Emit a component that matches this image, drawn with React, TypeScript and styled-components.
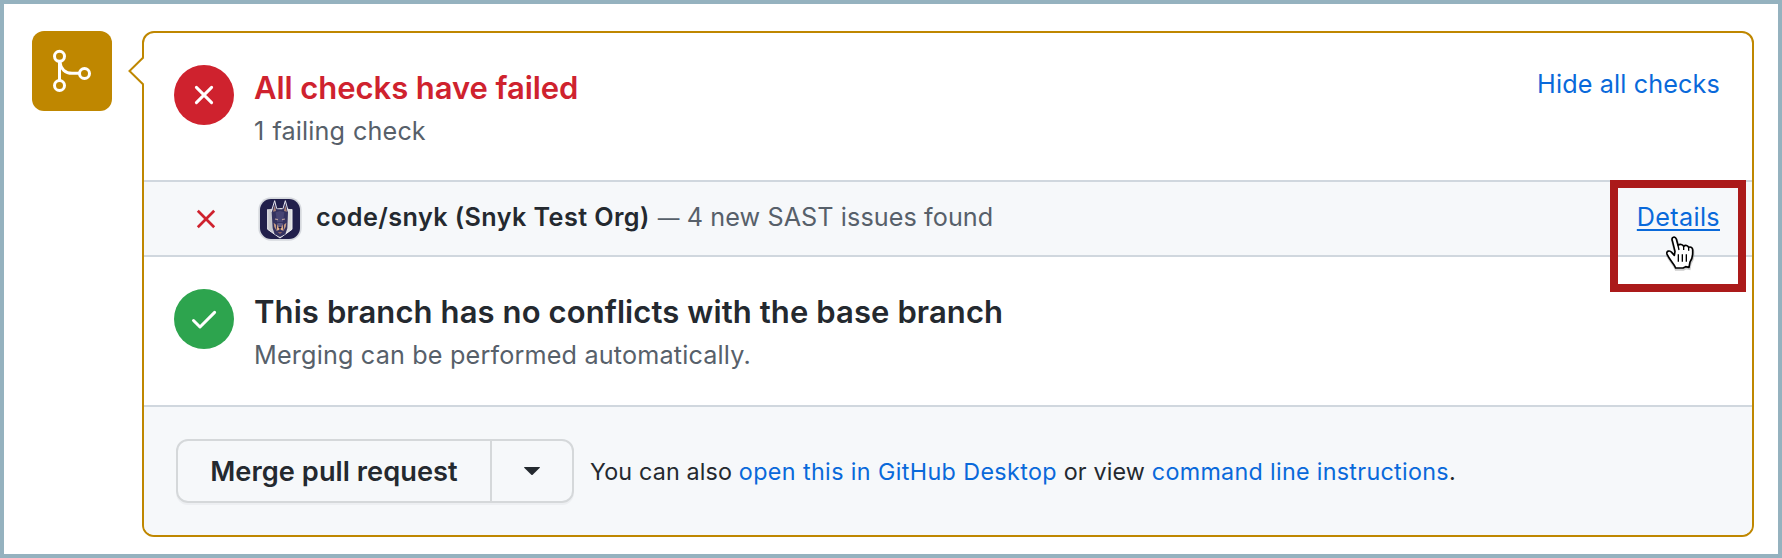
import React from "react";
import styled, { createGlobalStyle } from "styled-components";

const GlobalStyle = createGlobalStyle`
  * { box-sizing: border-box; }
  body {
    margin: 0;
    background: #ffffff;
    color: #24292f;
    font-family: Inter, "Liberation Sans", sans-serif;
    font-size: 25.2px;
    line-height: 38px;
  }
`;

const Frame = styled.main`
  display: flex;
  align-items: flex-start;
  gap: 30px;
  width: 1782px;
  height: 558px;
  padding: 27px 24px 0 28px;
  border: 4px solid #95b2bf;
`;

const MergeBadge = styled.div`
  flex: none;
  display: flex;
  align-items: center;
  justify-content: center;
  width: 80px;
  height: 80px;
  border-radius: 12px;
  background: #bf8700;
`;

const Card = styled.section`
  position: relative;
  flex: 1;
  height: 506px;
  border: 2px solid #bf8700;
  border-radius: 12px;
  background: #ffffff;
`;

const Pointer = styled.svg`
  position: absolute;
  left: -17px;
  top: 22px;
`;

const StatusSection = styled.div<{ $height: number }>`
  display: flex;
  align-items: flex-start;
  height: ${(p) => p.$height}px;
  padding: 32px 32px 0 30px;
  border-bottom: 2px solid #d0d7de;
`;

const StatusCircle = styled.div<{ $color: string }>`
  flex: none;
  display: flex;
  align-items: center;
  justify-content: center;
  width: 60px;
  height: 60px;
  margin-right: 20px;
  border-radius: 50%;
  background: ${(p) => p.$color};
`;

const StatusText = styled.div`
  flex: 1;
  margin-top: -1px;
`;

const StatusTitle = styled.h3<{ $failed?: boolean }>`
  margin: 0;
  font-size: 31px;
  font-weight: 600;
  line-height: 48px;
  letter-spacing: ${(p) => (p.$failed ? "-0.06px" : "0.1px")};
  color: ${(p) => (p.$failed ? "#cf222e" : "#24292f")};
`;

const StatusNote = styled.p<{ $spacing: number; $wordSpacing?: number }>`
  margin: 0;
  color: #57606a;
  letter-spacing: ${(p) => p.$spacing}px;
  word-spacing: ${(p) => p.$wordSpacing ?? 0}px;
`;

const Link = styled.a<{ $underlined?: boolean; $spacing: number }>`
  color: #0969da;
  text-decoration: ${(p) => (p.$underlined ? "underline" : "none")};
  text-decoration-thickness: 2px;
  text-underline-offset: 3px;
  letter-spacing: ${(p) => p.$spacing}px;
  cursor: pointer;
`;

const CheckRow = styled.div`
  display: flex;
  align-items: center;
  height: 75px;
  padding: 0 32px 0 46px;
  border-bottom: 2px solid #d0d7de;
  background: #f6f8fa;
`;

const CheckIcon = styled.div`
  display: flex;
  justify-content: center;
  width: 32px;
  margin-right: 36px;
`;

const Avatar = styled.svg`
  flex: none;
  width: 44px;
  height: 44px;
  margin-right: 14px;
`;

const CheckLabel = styled.div`
  flex: 1;
  padding-bottom: 3px;
  letter-spacing: 0.08px;
  color: #57606a;
`;

const CheckName = styled.strong`
  margin-right: 8px;
  font-weight: 600;
  letter-spacing: 0.412px;
  color: #24292f;
`;

const Dash = styled.span`
  font-size: 21.7px;
`;

const DetailsCell = styled.div`
  position: relative;
  padding-bottom: 3px;
`;

const Highlight = styled.div`
  position: absolute;
  right: -26px;
  top: -18px;
  width: 136px;
  height: 112px;
  border: 8px solid #ab1a1a;
`;

const HandCursor = styled.svg`
  position: absolute;
  left: 25px;
  top: 37px;
`;

const Footer = styled.div`
  display: flex;
  align-items: center;
  height: 128px;
  padding-left: 32px;
  border-radius: 0 0 10px 10px;
  background: #f6f8fa;
`;

const ButtonGroup = styled.div`
  display: flex;
  width: 398px;
  height: 64px;
  margin-right: 16px;
  border: 2px solid #d5d8da;
  border-radius: 12px;
  box-shadow: 0 2px 0 rgba(31, 35, 40, 0.04);
`;

const MergeButton = styled.button`
  width: 314px;
  padding: 0;
  border: 0;
  border-right: 2px solid #d5d8da;
  background: transparent;
  color: #24292f;
  font-family: inherit;
  font-size: 27.2px;
  font-weight: 600;
  letter-spacing: 0.06px;
`;

const MenuButton = styled.button`
  flex: 1;
  display: flex;
  align-items: center;
  justify-content: center;
  padding: 0;
  border: 0;
  background: transparent;
`;

const Hint = styled.p`
  margin: 0;
  padding-top: 2px;
  font-size: 23.3px;
  letter-spacing: 0.157px;
  white-space: nowrap;
`;

const MergeIcon = () => (
  <svg width="40" height="44" viewBox="52 49 40 44" fill="none" stroke="#ffffff" strokeWidth="3">
    <circle cx="59.5" cy="56.3" r="5" />
    <circle cx="59.5" cy="85.5" r="5" />
    <circle cx="84.5" cy="73.5" r="5" />
    <path d="M59.5 61.3V80.5M60 62C60.5 69 65.5 73.3 72 73.3H79.5" />
  </svg>
);

const CrossIcon = ({ color, rounded }: { color: string; rounded?: boolean }) => (
  <svg
    width="20"
    height="20"
    viewBox="0 0 20 20"
    fill="none"
    stroke={color}
    strokeWidth={rounded ? 3 : 2.7}
    strokeLinecap={rounded ? "round" : "butt"}
  >
    {rounded ? (
      <path d="M2.4 2.4L17.6 17.6M17.6 2.4L2.4 17.6" />
    ) : (
      <path d="M1.8 1.8L18.2 18.2M18.2 1.8L1.8 18.2" />
    )}
  </svg>
);

const CheckMark = () => (
  <svg width="28" height="28" viewBox="190 305 28 28" fill="none" stroke="#ffffff" strokeWidth="3" strokeLinecap="round" strokeLinejoin="round">
    <path d="M193.5 320.5L200 327L214.6 312.4" />
  </svg>
);

const DogAvatar = () => (
  <Avatar viewBox="-6 -6 132 132">
    <rect x="-5" y="-5" width="130" height="130" rx="38" fill="#d5d8dd" />
    <rect width="120" height="120" rx="33" fill="#211f4b" />
    <path d="M23 31L60 27L96 31V91L60 116L23 91Z" fill="#c8c8ce" />
    <path d="M60 27L96 31V91L60 116Z" fill="#dededf" />
    <path d="M23 31V91L60 117L96 91V31" fill="none" stroke="#f2f2f5" strokeWidth="3" />
    <path d="M35 40L44 5L52 31H67L76 5L84 40L82 88L76 106L60 114L44 106L38 88Z" fill="#343260" />
    <path d="M34 38L44 5L50 29M69 29L76 5L85 38" fill="none" stroke="#e7e7ee" strokeWidth="3" />
    <path d="M39 38L44 19L48 36ZM72 36L76 19L81 38Z" fill="#a98276" />
    <path d="M47 40L60 36L73 40L69 69H51Z" fill="#474473" />
    <path d="M45 60L54 62M66 62L75 60" stroke="#b8a0a0" strokeWidth="3.5" />
    <path d="M41 71L48 77V92L43 84ZM79 71L72 77V92L77 84Z" fill="#c59a82" />
    <path d="M52 72H68L66 89H54Z" fill="#5c5984" />
    <path d="M53 75L49 95L57 93L60 88L63 93L71 95L67 75L64 87H56Z" fill="#e1ae88" />
    <path d="M55 84H65L60 91Z" fill="#17163a" />
    <path d="M53 100H67L60 104Z" fill="#a47168" />
  </Avatar>
);

const HAND_OUTLINE =
  "M31 17C27 6 39 2 43 12L48 31C54 26 62 28 65 34C70 29 77 31 80 37C87 34 93 39 92 48C93 67 90 73 84 81L81 97L71 95L63 99H41C36 85 21 73 15 57C12 48 23 45 29 52L37 61L39 49Z";

const Hand = () => (
  <HandCursor width="38" height="40" viewBox="0 0 114 120">
    <path d={HAND_OUTLINE} transform="translate(1 4)" fill="none" stroke="#000000" strokeOpacity="0.2" strokeWidth="8" />
    <path d={HAND_OUTLINE} fill="#ffffff" stroke="#000000" strokeWidth="5" strokeLinejoin="round" />
    <path d="M48 31L51 45M65 34V45M80 37V47M49 58V80M61 58V80M73 58V80" fill="none" stroke="#000000" strokeWidth="4" />
  </HandCursor>
);

export default function App() {
  return (
    <>
      <GlobalStyle />
      <Frame>
        <MergeBadge>
          <MergeIcon />
        </MergeBadge>
        <Card>
          <Pointer width="18" height="32" viewBox="0 0 18 32">
            <path d="M18 1.5L3 16L18 30.5Z" fill="#ffffff" />
            <path d="M16.5 2.3L2.5 16L16.5 29.7" fill="none" stroke="#bf8700" strokeWidth="2" />
          </Pointer>
          <StatusSection $height={149}>
            <StatusCircle $color="#cf222e">
              <CrossIcon color="#ffffff" rounded />
            </StatusCircle>
            <StatusText>
              <StatusTitle $failed>All checks have failed</StatusTitle>
              <StatusNote $spacing={0.1} $wordSpacing={1}>1 failing check</StatusNote>
            </StatusText>
            <Link $spacing={0.134}>Hide all checks</Link>
          </StatusSection>
          <CheckRow>
            <CheckIcon>
              <CrossIcon color="#cf222e" />
            </CheckIcon>
            <DogAvatar />
            <CheckLabel>
              <CheckName>code/snyk (Snyk Test Org)</CheckName>
              <Dash>—</Dash> 4 new SAST issues found
            </CheckLabel>
            <DetailsCell>
              <Link $underlined $spacing={0.33}>Details</Link>
              <Highlight />
              <Hand />
            </DetailsCell>
          </CheckRow>
          <StatusSection $height={150}>
            <StatusCircle $color="#2da44e">
              <CheckMark />
            </StatusCircle>
            <StatusText>
              <StatusTitle>This branch has no conflicts with the base branch</StatusTitle>
              <StatusNote $spacing={0.17}>Merging can be performed automatically.</StatusNote>
            </StatusText>
          </StatusSection>
          <Footer>
            <ButtonGroup>
              <MergeButton>Merge pull request</MergeButton>
              <MenuButton aria-label="Select merge method">
                <svg width="16" height="8" viewBox="0 0 16 8">
                  <path d="M0.6 0H15.4C16 0 16.1 0.5 15.8 0.8L8.7 7.7Q8 8.3 7.3 7.7L0.2 0.8C-0.1 0.5 0 0 0.6 0Z" fill="#24292f" />
                </svg>
              </MenuButton>
            </ButtonGroup>
            <Hint>
              You can also <Link $spacing={0.39}>open this in GitHub Desktop</Link> or view{" "}
              <Link $spacing={0.308}>command line instructions</Link>.
            </Hint>
          </Footer>
        </Card>
      </Frame>
    </>
  );
}
